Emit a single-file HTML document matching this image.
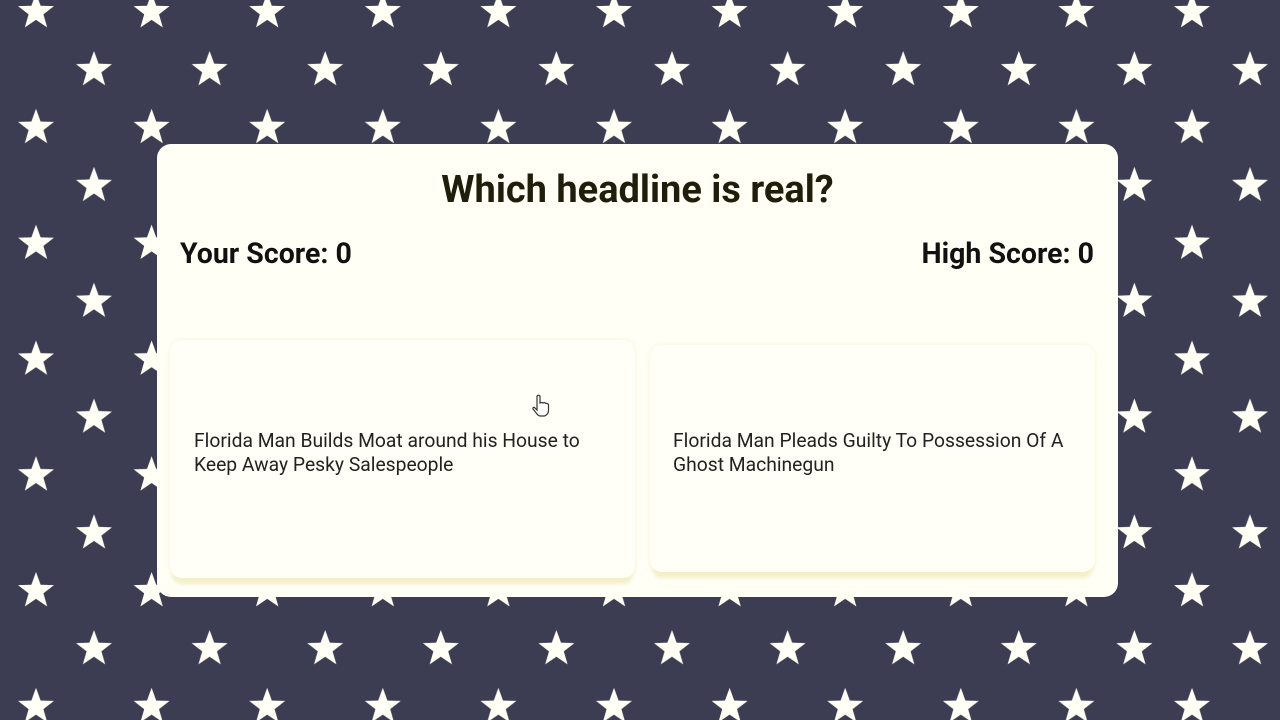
<!DOCTYPE html>
<html><head><meta charset="utf-8"><style>
html,body{margin:0;padding:0;width:1280px;height:720px;overflow:hidden;background:#3c3c52;font-family:Roboto,"Liberation Sans",sans-serif}
svg.bg{position:absolute;left:0;top:0}
.card{position:absolute;left:157px;top:144px;width:961px;height:453px;background:#fffff6;border-radius:14px}
h1{position:absolute;top:168px;margin:0;text-align:center;font-size:38px;font-weight:bold;color:#1e1e0a}
.s{position:absolute;top:237px;font-size:28.5px;font-weight:bold;color:#111}
.c{position:absolute;background:#fffff7;border-radius:12px;box-shadow:0 8px 4px -2px #f3efc8,0 0 6px #f5f3dc;font-size:19.3px;color:#222;line-height:24px}
</style></head><body>
<svg class="bg" width="1280" height="720"><defs>
<polygon id="st" points="0,-19 4.6,-6.3 18,-5.9 7.4,2.4 11.2,15.4 0,7.8 -11.2,15.4 -7.4,2.4 -18,-5.9 -4.6,-6.3" fill="#fffff5"/>
<pattern id="p" x="0" y="0" width="115.6" height="115.8" patternUnits="userSpaceOnUse">
<use href="#st" x="36" y="12"/><use href="#st" x="36" y="127.8"/><use href="#st" x="-79.6" y="12"/>
<use href="#st" x="94" y="70"/><use href="#st" x="-21.6" y="70"/><use href="#st" x="151.6" y="12"/>
</pattern></defs><rect width="1280" height="720" fill="url(#p)"/></svg>
<div class="card"></div>
<h1 style="left:157px;width:961px">Which headline is real?</h1>
<div class="s" style="left:180px">Your Score: 0</div>
<div class="s" style="right:186px">High Score: 0</div>
<div class="c" style="left:170px;top:340px;width:465px;height:238px"><div style="position:absolute;left:24px;top:89px;width:420px">Florida Man Builds Moat around his House to Keep Away Pesky Salespeople</div></div>
<div class="c" style="left:650px;top:345px;width:445px;height:227px"><div style="position:absolute;left:23px;top:84px;width:405px">Florida Man Pleads Guilty To Possession Of A Ghost Machinegun</div></div>
<svg style="position:absolute;left:531px;top:394px" width="22" height="24" viewBox="0 0 22 24"><path d="M6 2 q1.5-1.5 3 0 v7 q1.5-1 3 0 q1.5-1 3 0.5 q1.5-0.5 2.5 1 v6 q0 4-4 5.5 h-4 q-2 0-3.5-2 l-4-5 q-0.5-2 1.5-1.5 l2.5 2.5 z" fill="#fff" stroke="#333" stroke-width="1.2"/></svg>
</body></html>
